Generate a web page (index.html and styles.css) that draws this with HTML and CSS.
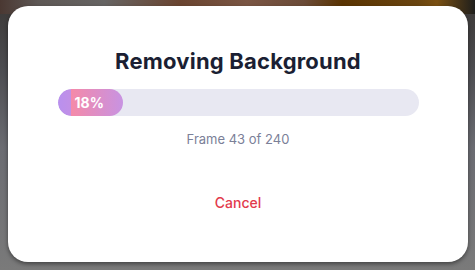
FILE: index.html
```html
<!DOCTYPE html>
<html>
<head>
<meta charset="utf-8">
<link rel="stylesheet" href="styles.css">
</head>
<body>
<div class="scene">
  <div class="dialog">
    <h1 class="title">Removing Background</h1>
    <div class="track">
      <div class="fill" style="width: 65px;"><span class="pct">18%</span></div>
    </div>
    <div class="frame">Frame 43 of 240</div>
    <button class="cancel">Cancel</button>
  </div>
</div>
</body>
</html>
```
FILE: styles.css
```css
html, body {
  margin: 0;
  padding: 0;
  width: 475px;
  height: 270px;
  overflow: hidden;
}
body {
  font-family: "Inter", "Liberation Sans", sans-serif;
  background:
    linear-gradient(90deg, #4a3832 0%, #5e5855 8%, #666463 22%, #6a4430 38%, #7a5644 52%, #6b4b38 64%, #5a3402 72%, #6a4510 88%, #7a5012 92%, #1e1e1c 100%) top / 100% 14px no-repeat,
    linear-gradient(180deg, #3b3836 0%, #4c4c50 25%, #6b6c72 55%, #7a7a7a 100%);
}
.scene {
  padding: 6px 7px 8px 8px;
}
.dialog {
  width: 460px;
  height: 256px;
  box-sizing: border-box;
  background: #fff;
  border-radius: 20px;
  box-shadow: 0 2px 4px rgba(0,0,0,0.45);
  display: flex;
  flex-direction: column;
  align-items: center;
  padding-top: 43px;
}
.title {
  margin: 0;
  font-size: 22px;
  line-height: 24px;
  font-weight: 700;
  color: #1b1f33;
  letter-spacing: 0.2px;
}
.track {
  margin-top: 16px;
  width: 361px;
  height: 27px;
  border-radius: 14px;
  background: #e8e8f2;
  overflow: hidden;
}
.fill {
  height: 100%;
  border-radius: 14px;
  background:
    linear-gradient(90deg, #b990ee 0, #c190e6 13px, #f58aa8 13px, #e58cbc 30px, #c893e2 100%);
  display: flex;
  align-items: center;
  padding-left: 17px;
  box-sizing: border-box;
}
.pct {
  color: #fff;
  font-weight: 700;
  font-size: 14px;
}
.frame {
  margin-top: 15px;
  font-size: 13px;
  color: #7b8098;
}
.cancel {
  margin-top: 47px;
  border: 0;
  background: none;
  padding: 0;
  font-family: inherit;
  font-size: 14px;
  font-weight: 500;
  color: #e23a4c;
}
```
